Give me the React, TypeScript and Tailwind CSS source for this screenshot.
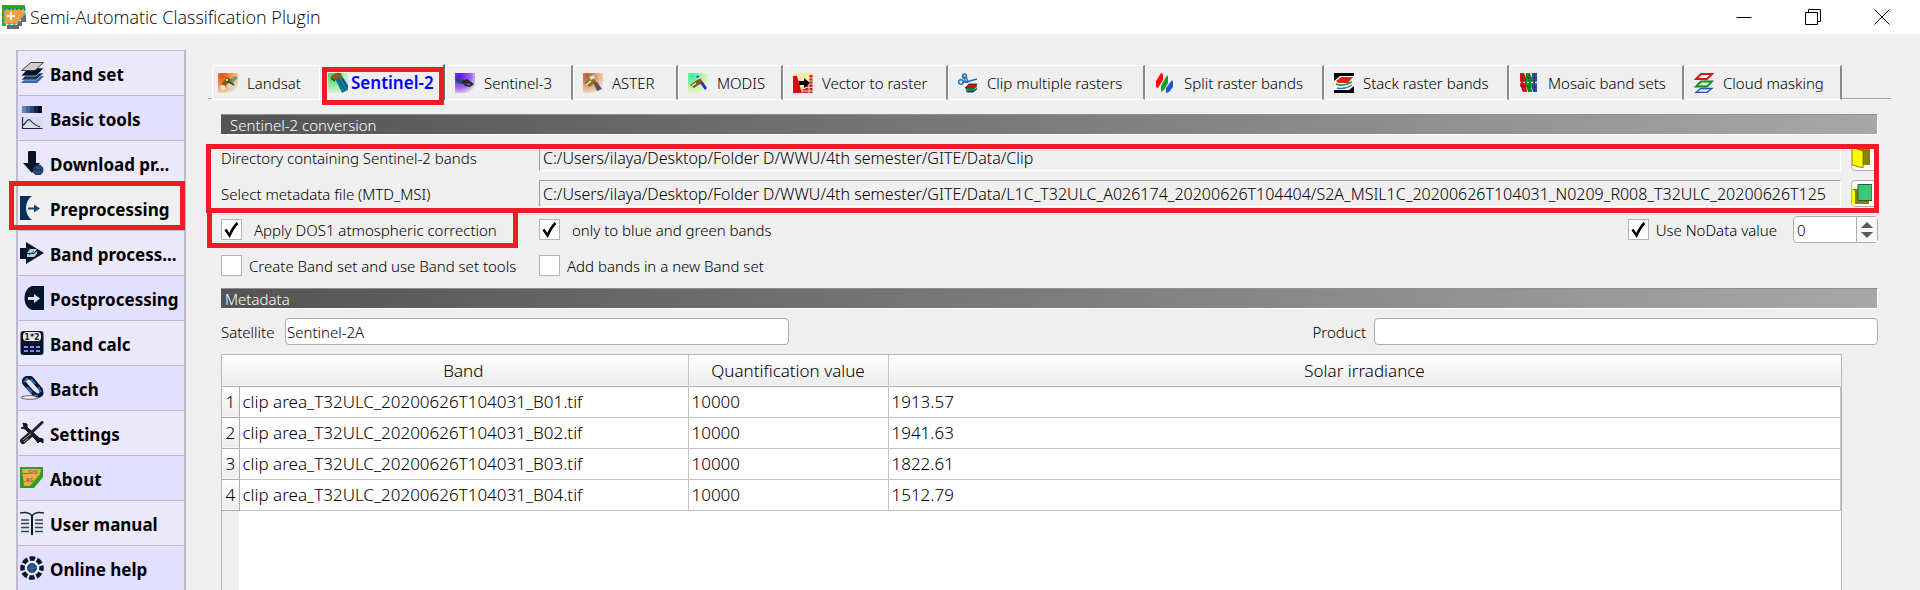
import type { ReactNode } from 'react';

const NAVY = '#07152b';

function Highlight({ className }: { className: string }) {
  return <span aria-hidden="true" className={`pointer-events-none absolute z-10 border-5 border-[#ee1c24] ${className}`} />;
}

function Icon({ children, size = 24 }: { children: ReactNode; size?: 20 | 24 }) {
  return (
    <svg aria-hidden="true" viewBox={`0 0 ${size} ${size}`} className={size === 24 ? 'size-6 shrink-0' : 'size-5 shrink-0'}>
      {children}
    </svg>
  );
}

const PluginIcon = () => (
  <Icon>
    <path d="M5 20H17V24H5ZM15 16H20V21H15ZM19 10H24V17H19Z" fill="#6a6a6a" />
    <path d="M0 0H23V4H4V21H0Z" fill="#2fa514" />
    <path d="M2 4H23V9L15 19H2Z" fill="#f6a03c" stroke="#10b6c4" strokeWidth="1.4" strokeDasharray="3 2" />
    <path d="M2 4H23" stroke="#2b4f2a" strokeWidth="1" strokeDasharray="2 2" />
    <path d="M9 7V15M5 11H13" stroke="#fff" strokeWidth="1.8" />
  </Icon>
);

const BandSetIcon = () => (
  <Icon>
    <path d="M8 15H24L17 22H1Z" fill="#3566ad" />
    <path d="M8 12H24L16 19H1Z" fill="#17365f" stroke="#ebe8fa" strokeWidth=".6" />
    <path d="M8 7H24L16 15H1Z" fill={NAVY} stroke="#ebe8fa" strokeWidth=".6" />
    <path d="M11 1.500H23.500L15 9.500H1.500Z" fill="#cdcdcd" stroke="#333" strokeWidth=".9" />
  </Icon>
);

const BasicToolsIcon = () => (
  <Icon>
    <path d="M2 0h5v7H2z" fill="#6088bd" />
    <path d="M6 0h4v7H6z" fill="#436799" />
    <path d="M10 0h4v7h-4z" fill="#2b4878" />
    <path d="M14 0h4v7h-4z" fill="#142747" />
    <path d="M18 0h4v7h-4z" fill="#020a1c" />
    <path d="M2 11h21v12H2z" fill="#d9dcea" />
    <path d="M2.500 11V22.500H22.500M3 19C6 18 7 12 10 14C13 18 15 19 20 21" fill="none" stroke="#1a2b45" strokeWidth="1.200" />
  </Icon>
);

const DownloadIcon = () => (
  <Icon>
    <path d="M8 1Q8 0 9 0H15Q16 0 16 1V12H20L12 22 3 12H8Z" fill={NAVY} />
    <circle cx="18" cy="19" r="5" fill="#2c5283" stroke="#122b4d" />
    <path d="M13.500 19H22.500M18 14.500V23.500M15.500 15.500V22.500M20.500 15.500V22.500" stroke="#16365f" strokeWidth=".7" />
  </Icon>
);

const PreprocessingIcon = () => (
  <Icon>
    <path d="M0 0H12C4 5 4 19 12 24H0Z" fill="#073060" />
    <path d="M8 11.500H14V8.500L20 12.500 14 16.500V13.500H8Z" fill="#1d4474" />
  </Icon>
);

const BandProcessingIcon = () => (
  <Icon>
    <path d="M0 7H6V1L24 12 6 23V18H0Z" fill={NAVY} />
    <path d="M7 12 10 8H17L14 12ZM7 13H14L17 10V13L14 16H7Z" fill="#b8cfe0" />
    <path d="M9 14 14 10" stroke="#41617d" />
  </Icon>
);

const PostprocessingIcon = () => (
  <Icon>
    <path d="M24 0H12C2 3 2 21 12 24H24Z" fill={NAVY} />
    <path d="M8 11H14V8L20 12.500 14 17V14H8Z" fill="#d9e6f2" />
  </Icon>
);

const CalcIcon = () => (
  <Icon>
    <rect x=".5" y="0" width="23" height="24" rx="3" fill={NAVY} />
    <rect x="3" y="1" width="18" height="9" rx="3.500" fill="#ecebe6" />
    <text x="12" y="8.500" textAnchor="middle" fontSize="8" fontWeight="700" fontFamily="DejaVu Sans, sans-serif" fill="#222">1*2</text>
    <path d="M4 15h4v2H4zM10 15h4v2h-4zM16 15h4v2h-4zM4 19h4v2H4zM10 19h4v2h-4zM16 19h4v2h-4z" fill="#8e86f0" />
  </Icon>
);

const BatchIcon = () => (
  <Icon>
    <ellipse cx="10" cy="21.500" rx="9" ry="1.800" fill="#eef" stroke="#333" strokeWidth=".7" />
    <path d="M5.500 2.500Q9 0 12.500 3.500L20.500 13Q23 18 19.500 19.500Q16 20 12 16L5 8Q2.500 4.500 5.500 2.500Z" fill="none" stroke={NAVY} strokeWidth="4" />
    <path d="M4 6 8 2M11 3 15 8M7 11 12 17M18 11 21 16M14 19 18 20" stroke="#2c6fc0" strokeWidth="2" />
  </Icon>
);

const SettingsIcon = () => (
  <Icon>
    <path d="M3 2 7 3V6L19 17 23 18V22L20 20 18 22 16 19 5 8 1 7 4 6Z" fill={NAVY} stroke={NAVY} />
    <path d="M22 1.500 10 13" stroke="#222" strokeWidth="3" strokeLinecap="round" />
    <path d="M11 13 3 20" stroke="#222" strokeWidth="6" strokeLinecap="round" />
    <path d="M11 12.500 3 19M8 17.500 4 21" stroke="#a9a9a9" strokeWidth="1" />
  </Icon>
);

const AboutIcon = () => (
  <Icon>
    <path d="M0 1H23V11L14 22H0Z" fill="#2aa01c" />
    <path d="M2 3H21L20 8 10 20H4Z" fill="#f2a843" />
    <path d="M3 7.500H8M3 15.500H5" stroke="#7d7450" />
    <text x="8" y="8" fontSize="5" fontWeight="700" fontFamily="DejaVu Sans, sans-serif" fill="#7d7450">GIS</text>
    <text x="6" y="16" fontSize="5" fontWeight="700" fontFamily="DejaVu Sans, sans-serif" fill="#7d7450">RS</text>
  </Icon>
);

const ManualIcon = () => (
  <Icon>
    <path d="M1 3H11V23H1ZM13 3H23V23H13Z" fill="#e7e7ee" />
    <path d="M0 2Q9 0 12 5Q15 0 24 2" fill="none" stroke="#152a45" strokeWidth="1.500" />
    <path d="M12 4V24" stroke={NAVY} strokeWidth="2" />
    <path d="M1 9H9M1 12.500H9M1 16.500H9M1 20.500H9M15 9H23M15 12.500H23M15 16.500H23M15 20.500H23" stroke="#33475f" strokeWidth="1.300" />
  </Icon>
);

const HelpIcon = () => (
  <Icon>
    <circle cx="12" cy="12" r="9.500" fill="#f1f1f8" stroke={NAVY} strokeWidth="4.500" strokeDasharray="5.460 2" strokeDashoffset="2.700" />
    <circle cx="12" cy="12" r="4.500" fill="#1d4c85" stroke="#163a68" />
    <path d="M8 12H16M12 8V16" stroke="#4b7fb8" strokeWidth=".7" />
  </Icon>
);

const sections = [
  { name: 'Band set', icon: <BandSetIcon /> },
  { name: 'Basic tools', icon: <BasicToolsIcon /> },
  { name: 'Download pr...', icon: <DownloadIcon /> },
  { name: 'Preprocessing', icon: <PreprocessingIcon />, active: true },
  { name: 'Band process...', icon: <BandProcessingIcon /> },
  { name: 'Postprocessing', icon: <PostprocessingIcon /> },
  { name: 'Band calc', icon: <CalcIcon /> },
  { name: 'Batch', icon: <BatchIcon /> },
  { name: 'Settings', icon: <SettingsIcon /> },
  { name: 'About', icon: <AboutIcon /> },
  { name: 'User manual', icon: <ManualIcon /> },
  { name: 'Online help', icon: <HelpIcon /> },
];

function Glow({ id, from, to, children }: { id: string; from: string; to: string; children: ReactNode }) {
  return (
    <Icon size={20}>
      <defs>
        <radialGradient id={id} cx=".2" cy=".15" r="1">
          <stop offset="0" stopColor={from} />
          <stop offset=".6" stopColor={to} />
          <stop offset="1" stopColor="#efefef" />
        </radialGradient>
      </defs>
      <path d="M0 0H20V13Q17 19 10 20H0Z" fill={`url(#${id})`} />
      {children}
    </Icon>
  );
}

const LandsatIcon = () => (
  <Glow id="g-landsat" from="#f04a20" to="#f9a860">
    <path d="M10 8 17 3 20 5 13 11Z" fill="#5f9c86" />
    <path d="M3 11 9 4 14 7 8 13Z" fill="#7d6414" />
    <path d="M8 12 13 9 18 14 14 18Z" fill="#d5d5cf" />
    <path d="M2 13 6 12 8 16 4 17Z" fill="#efe9dd" />
    <path d="M8 7 16 12" stroke="#4c3f14" strokeWidth="1.500" />
    <circle cx="9" cy="7" r="1" fill="#fff" />
  </Glow>
);

const Sentinel2Icon = () => (
  <Glow id="g-s2" from="#35d55c" to="#a9efac">
    <path d="M7 6 14 3 20 12V17L14 20Z" fill="#0f7f9c" />
    <path d="M10 6 17 17M14 5 19 14" stroke="#0a4a7a" strokeWidth="1.200" />
    <path d="M3 3 8 0H13L14 4 7 7Z" fill="#8b5a14" />
    <path d="M3 4 7 7V9L3 6Z" fill="#4c2c08" />
  </Glow>
);

const Sentinel3Icon = () => (
  <Glow id="g-s3" from="#5a10f0" to="#9d68ea">
    <path d="M0 5 8 6V11L2 10Z" fill="#14507c" />
    <path d="M6 8 12 6 19 11 15 14 10 13Z" fill="#2a2433" />
    <path d="M10 11 14 10 16 13Z" fill="#6a6472" />
  </Glow>
);

const AsterIcon = () => (
  <Glow id="g-aster" from="#b4602c" to="#e4b184">
    <path d="M1 10 8 4 13 8 7 14Z" fill="#8d7320" />
    <path d="M10 9 14 9 19 16 14 18Z" fill="#55555c" />
    <path d="M6 4 11 2 12 5 8 7Z" fill="#dcdcd4" />
    <path d="M3 12 8 8" stroke="#f4f0e0" strokeWidth="1.500" />
  </Glow>
);

const ModisIcon = () => (
  <Glow id="g-modis" from="#2ff09e" to="#c9f5a4">
    <path d="M2 12 12 5 15 9 6 15Z" fill="#7c5a1c" />
    <path d="M12 10 15 9 19 15 17 17Z" fill="#2a2cc8" />
    <path d="M8 4 10 2 13 6 11 7Z" fill="#3c4db8" />
    <path d="M4 13 8 10M9 6 14 4" stroke="#e8e6d8" strokeWidth="1.500" />
  </Glow>
);

const VectorIcon = () => (
  <Icon size={20}>
    <path d="M0 0H20V20H0Z" fill="#fbe9a8" />
    <path d="M0 3H4L9 20H0Z" fill="#d40b12" />
    <path d="M18 2V20M14 8V20M11 16V20" stroke="#c8202a" strokeWidth="3" />
    <path d="M9 14.500H20M9 18H20M16 5H20M12.500 8H20M12.500 11H20" stroke="#f3c9b4" strokeWidth="1" />
    <path d="M6 8H11V5L17 10 11 15V12H6Z" fill="#000" />
  </Icon>
);

const ClipIcon = () => (
  <Icon size={20}>
    <path d="M7 15 11 11H19L15 16Z" fill="#d31313" stroke="#300" strokeWidth=".7" />
    <path d="M8 15H15L19 12V14L15 17.500H8Z" fill="#0a8c12" />
    <path d="M8 17.500H15L19 15V16.500L15 19.500H9Z" fill="#10329a" />
    <path d="M8 9 19 6M8 10 5 2" stroke="#1d6fb0" strokeWidth="1.500" />
    <circle cx="3" cy="9" r="2.300" fill="none" stroke="#1d6fb0" strokeWidth="1.400" />
    <circle cx="6.500" cy="3" r="2" fill="none" stroke="#1d6fb0" strokeWidth="1.400" />
    <path d="M5 9H10L8 3" fill="none" stroke="#1d6fb0" strokeWidth="1.300" />
  </Icon>
);

const SplitIcon = () => (
  <Icon size={20}>
    <path d="M6 0 8 1V7L3 15 1 14V8Z" fill="#f90d0d" />
    <path d="M12 2 13 4V10L9 17 6 19V13Z" fill="#12a51c" />
    <path d="M17 7 18 9V14L14 19 11 20V15Z" fill="#1957d6" />
  </Icon>
);

const StackIcon = () => (
  <Icon size={20}>
    <path d="M0 0H20V20H0Z" fill="#000" />
    <path d="M0 8 6 3H20V13L15 17H0Z" fill="#fff" />
    <path d="M2 8 7 4H19L14 10H4Z" fill="#f5181c" />
    <path d="M2 11Q9 14 18 9" fill="none" stroke="#14a020" strokeWidth="1.800" />
    <path d="M3 15Q10 17 18 12" fill="none" stroke="#2b6be0" strokeWidth="1.400" />
  </Icon>
);

const MosaicIcon = () => (
  <Icon size={20}>
    <path d="M1 0H5L8 8 7 10 8 19H4L1 12Z" fill="#e01018" />
    <path d="M7 0H11L13 8 12 11 13 19H9L7 12Z" fill="#0e9418" />
    <path d="M13 0H18V19H14L12 12Z" fill="#1d52b8" />
    <path d="M0 9.500H19" stroke="#efefef" strokeWidth="1.500" strokeDasharray="2 2" />
    <path d="M4 1V19M10 1V19M15.500 1V19M1 13 18 14M2 4 18 5" stroke="#322" strokeWidth=".7" strokeDasharray="2 1" />
  </Icon>
);

const CloudIcon = () => (
  <Icon size={20}>
    <path d="M7 1H18L13 6H2Z" fill="#fff" stroke="#e0141c" strokeWidth="2" />
    <path d="M7 8.500H18L13 13.500H2Z" fill="#dff3df" stroke="#109418" strokeWidth="1.800" />
    <path d="M7 15.500H18L13 19.300H2Z" fill="#dbe8fa" stroke="#2355b0" strokeWidth="1.300" />
    <path d="M4 2 12 8M4 9 12 15.500" stroke="#555" strokeWidth=".6" />
  </Icon>
);

const tabs = [
  { name: 'Landsat', icon: <LandsatIcon />, width: 'min-w-[107px]' },
  { name: 'Sentinel-2', icon: <Sentinel2Icon />, width: 'min-w-[126px]', active: true },
  { name: 'Sentinel-3', icon: <Sentinel3Icon />, width: 'min-w-[128px]' },
  { name: 'ASTER', icon: <AsterIcon />, width: 'min-w-[105px]' },
  { name: 'MODIS', icon: <ModisIcon />, width: 'min-w-[105px]' },
  { name: 'Vector to raster', icon: <VectorIcon />, width: 'min-w-[165px]' },
  { name: 'Clip multiple rasters', icon: <ClipIcon />, width: 'min-w-[197px]' },
  { name: 'Split raster bands', icon: <SplitIcon />, width: 'min-w-[179px]' },
  { name: 'Stack raster bands', icon: <StackIcon />, width: 'min-w-[185px]' },
  { name: 'Mosaic band sets', icon: <MosaicIcon />, width: 'min-w-[175px]' },
  { name: 'Cloud masking', icon: <CloudIcon />, width: 'min-w-[158px]' },
];

const rows = [
  ['clip area_T32ULC_20200626T104031_B01.tif', '10000', '1913.57'],
  ['clip area_T32ULC_20200626T104031_B02.tif', '10000', '1941.63'],
  ['clip area_T32ULC_20200626T104031_B03.tif', '10000', '1822.61'],
  ['clip area_T32ULC_20200626T104031_B04.tif', '10000', '1512.79'],
];

function SectionBar({ title, className }: { title: string; className: string }) {
  return (
    <h2 className={`flex h-[21px] items-center border-t border-r border-b border-t-[#8f8f8f] border-r-white border-b-white bg-linear-to-r from-[#545454] to-[#a7a7a7] text-white ${className}`}>
      {title}
    </h2>
  );
}

function CheckBox({ label, checked = false, gap = 'gap-[7px]' }: { label: string; checked?: boolean; gap?: string }) {
  return (
    <label className={`flex items-center whitespace-nowrap ${gap}`}>
      <span className="relative size-[21px] shrink-0">
        <input type="checkbox" defaultChecked={checked} className="peer block size-full appearance-none border border-[#b4b4b4] bg-white" />
        <svg aria-hidden="true" viewBox="0 0 21 21" className="pointer-events-none absolute inset-0 hidden peer-checked:block">
          <path d="M4.500 10.500 8.500 16.500Q12 8.500 16.500 4" fill="none" stroke="#000" strokeWidth="2.500" />
        </svg>
      </span>
      {label}
    </label>
  );
}

function PathRow({ id, label, value, button, icon }: { id: string; label: string; value: string; button: string; icon: ReactNode }) {
  return (
    <div className="flex h-[27px] items-center">
      <label htmlFor={id} className="w-[318px] shrink-0">{label}</label>
      <input
        id={id}
        readOnly
        defaultValue={value}
        className="h-full min-w-0 flex-1 border border-t-[#9d9d9d] border-r-white border-b-white border-l-[#9d9d9d] bg-transparent pl-[3px] text-base outline-none"
      />
      <button type="button" aria-label={button} className="ml-[10px] flex size-[27px] shrink-0 items-center justify-start rounded-sm border border-[#b0b0b0] bg-white">
        {icon}
      </button>
    </div>
  );
}

export default function App() {
  return (
    <div className="flex h-screen flex-col overflow-hidden bg-[#efefef] font-['Noto_Sans',sans-serif] text-[15px] leading-5 font-[350] text-black">
      <header className="flex h-[34px] shrink-0 items-center justify-between bg-white pl-0.5">
        <h1 className="flex items-center gap-1 font-['Open_Sans',sans-serif] text-lg font-light">
          <PluginIcon />
          Semi-Automatic Classification Plugin
        </h1>
        <div className="flex pr-[15px]">
          <button type="button" aria-label="Minimize" className="flex h-[34px] w-[69px] items-center justify-center">
            <svg viewBox="0 0 16 16" className="size-4"><path d="M.5 8.500H15.500" stroke="#000" /></svg>
          </button>
          <button type="button" aria-label="Restore" className="flex h-[34px] w-[69px] items-center justify-center">
            <svg viewBox="0 0 16 16" className="size-4"><path d="M.5 3.500H12.500V15.500H.5ZM3.500 3.500V.5H15.500V12.500H12.500" fill="none" stroke="#000" /></svg>
          </button>
          <button type="button" aria-label="Close" className="flex h-[34px] w-[58px] items-center justify-center pl-3">
            <svg viewBox="0 0 16 16" className="size-4"><path d="M.5.5 15.500 15.500M15.500.5.5 15.500" stroke="#000" /></svg>
          </button>
        </div>
      </header>

      <div className="flex min-h-0 flex-1">
        <nav className="mt-4 ml-4 w-[170px] shrink-0 self-start border-x-2 border-t border-[#bdbbcb]">
          {sections.map((s) => (
            <div
              key={s.name}
              className={`relative border-b border-[#bdbbcb] ${s.active ? 'bg-[#efefef]' : 'odd:bg-[#ebe8fa] even:bg-[#e2dfff]'}`}
            >
              <button type="button" className="flex h-11 w-full items-center gap-1.5 pl-0.5 text-left text-[17px] font-bold whitespace-nowrap">
                {s.icon}
                <span className="pt-1">{s.name}</span>
              </button>
              {s.active && <Highlight className="-top-[5px] -right-px bottom-0 -left-[9px]" />}
            </div>
          ))}
        </nav>

        <main className="flex min-w-0 flex-1 flex-col pt-[30px] pr-[29px] pl-[22px]">
          <div role="tablist" className="flex h-9 shrink-0 items-end">
            <span className="h-0.5 w-1 border-t border-b border-t-[#a0a0a0] border-b-white" />
            {tabs.map((t) => (
              <button
                key={t.name}
                type="button"
                role="tab"
                aria-selected={!!t.active}
                className={`relative flex items-center border-t border-l border-white whitespace-nowrap ${t.width} ${
                  t.active
                    ? 'h-9 gap-[3px] rounded-tl-sm border-r-2 border-r-[#6e6e6e] pl-2 text-[17px] font-semibold text-[#0000fa]'
                    : t.name === 'Landsat'
                      ? 'h-[35px] gap-[9px] rounded-tl-sm border-b pl-[5px]'
                      : 'h-[35px] gap-[9px] rounded-tl-sm border-r-2 border-b border-r-[#8a8a8a] pl-[9px]'
                }`}
              >
                {t.icon}
                {t.name}
                {t.active && <Highlight className="top-0.5 -right-px -bottom-[5px] left-0.5" />}
              </button>
            ))}
            <span className="h-0.5 flex-1 border-t border-b border-t-[#a0a0a0] border-b-white" />
          </div>

          <form className="flex min-h-0 flex-1 flex-col gap-[9px] px-[13px] pt-[14px]">
            <SectionBar title="Sentinel-2 conversion" className="pl-[9px]" />

            <div className="relative flex flex-col gap-[9px]">
              <PathRow
                id="directory"
                label="Directory containing Sentinel-2 bands"
                value="C:/Users/ilaya/Desktop/Folder D/WWU/4th semester/GITE/Data/Clip"
                button="Select directory"
                icon={
                  <Icon size={20}>
                    <path d="M3 0H18V17H3Z" fill="#8a8300" />
                    <path d="M0 0H2L11 3V20L0 17Z" fill="#fdfb00" stroke="#6d6800" strokeWidth=".8" />
                  </Icon>
                }
              />
              <PathRow
                id="metadata"
                label="Select metadata file (MTD_MSI)"
                value="C:/Users/ilaya/Desktop/Folder D/WWU/4th semester/GITE/Data/L1C_T32ULC_A026174_20200626T104404/S2A_MSIL1C_20200626T104031_N0209_R008_T32ULC_20200626T125"
                button="Select metadata file"
                icon={
                  <Icon size={20}>
                    <path d="M0 5H17V20H0Z" fill="#8a8300" />
                    <path d="M0 5 3 7V20H0Z" fill="#fdfb00" />
                    <path d="M6 .5H20V16.500H6Z" fill="#3cc878" stroke="#1d5f38" />
                  </Icon>
                }
              />
              <Highlight className="top-0 -right-px -bottom-[6px] -left-[15px]" />
            </div>

            <div className="flex h-[27px] items-center">
              <div className="relative w-[318px] shrink-0">
                <CheckBox label="Apply DOS1 atmospheric correction" checked gap="gap-3" />
                <Highlight className="-top-[11px] right-[21px] -bottom-2 -left-[14px]" />
              </div>
              <CheckBox label="only to blue and green bands" checked gap="gap-3" />
              <div className="ml-auto flex items-center gap-4">
                <CheckBox label="Use NoData value" checked />
                <div className="flex h-[27px] w-[85px] rounded-sm border border-[#acacac] bg-white">
                  <input aria-label="NoData value" defaultValue="0" className="w-[62px] bg-transparent pl-[3px] outline-none" />
                  <div className="flex flex-1 flex-col items-center justify-center gap-1 border-l border-[#acacac] bg-[#f7f7f7]">
                    <button type="button" aria-label="Increase" className="block">
                      <svg viewBox="0 0 12 6" className="h-1.5 w-3"><path d="M0 6 6 0 12 6Z" fill="#5a5a5a" /></svg>
                    </button>
                    <button type="button" aria-label="Decrease" className="block">
                      <svg viewBox="0 0 12 6" className="h-1.5 w-3"><path d="M0 0 6 6 12 0Z" fill="#5a5a5a" /></svg>
                    </button>
                  </div>
                </div>
              </div>
            </div>

            <div className="flex h-[27px] items-center">
              <div className="w-[318px] shrink-0">
                <CheckBox label="Create Band set and use Band set tools" />
              </div>
              <CheckBox label="Add bands in a new Band set" />
            </div>

            <SectionBar title="Metadata" className="pl-1" />

            <div className="flex h-[27px] items-center justify-between">
              <div className="flex h-full items-center">
                <label htmlFor="satellite" className="w-16">Satellite</label>
                <input id="satellite" defaultValue="Sentinel-2A" className="h-full w-[504px] rounded-sm border border-[#acacac] bg-white pl-px outline-none" />
              </div>
              <div className="flex h-full items-center gap-2">
                <label htmlFor="product">Product</label>
                <input id="product" className="h-full w-[504px] rounded-sm border border-[#acacac] bg-white pl-px outline-none" />
              </div>
            </div>

            <div className="mr-9 min-h-0 flex-1 border-x border-t border-[#b5b5b5] bg-linear-to-r from-[#efefef] from-[17px] to-white to-[17px] text-[17px]">
              <table className="w-full table-fixed border-collapse">
                <colgroup>
                  <col className="w-[17px]" />
                  <col className="w-[449px]" />
                  <col className="w-[200px]" />
                  <col />
                </colgroup>
                <thead>
                  <tr className="h-[31px] border-b border-[#acacac] bg-linear-to-b from-white to-[#ececec]">
                    <th aria-label="Row" />
                    <th className="border-r border-[#c4c4c4] pt-0.5 font-[350]">Band</th>
                    <th className="border-r border-[#c4c4c4] pt-0.5 font-[350]">Quantification value</th>
                    <th className="pt-0.5 font-[350]">Solar irradiance</th>
                  </tr>
                </thead>
                <tbody>
                  {rows.map(([band, quant, solar], i) => (
                    <tr key={band} className="h-[31px] border-b border-[#c4c4c4]">
                      <th className="border-r border-b border-[#acacac] bg-linear-to-b from-white to-[#ececec] p-0 text-center font-[350]">{i + 1}</th>
                      <td className="border-r border-[#c4c4c4] p-0 pl-[3px]">{band}</td>
                      <td className="border-r border-[#c4c4c4] p-0 pl-[3px]">{quant}</td>
                      <td className="border-r border-[#c4c4c4] p-0 pl-[3px]">{solar}</td>
                    </tr>
                  ))}
                </tbody>
              </table>
            </div>
          </form>
        </main>
      </div>
    </div>
  );
}
